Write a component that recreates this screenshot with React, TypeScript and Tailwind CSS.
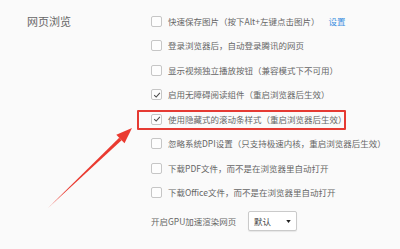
import { ReactNode } from "react";

const font = { fontFamily: '"Noto Sans CJK SC", "Noto Sans", sans-serif' };

function Checkbox({ checked }: { checked?: boolean }) {
  return (
    <span className="flex h-[11px] w-[11px] shrink-0 items-center justify-center rounded-[2px] border border-[#c6c6c6] bg-[#fdfdfd]">
      {checked && (
        <svg viewBox="0 0 10 10" className="h-[8px] w-[8px]">
          <path d="M1.5 5.2 L4 7.6 L8.6 2.4" fill="none" stroke="#4a4a4a" strokeWidth="1.3" />
        </svg>
      )}
    </span>
  );
}

function Row({ checked, children }: { checked?: boolean; children: ReactNode }) {
  return (
    <div className="flex h-[24.5px] items-center gap-[6px]">
      <Checkbox checked={checked} />
      <span className="whitespace-nowrap">{children}</span>
    </div>
  );
}

export default function App() {
  return (
    <div className="relative h-[249px] w-[400px] overflow-hidden bg-[#fafafa] text-[#666]" style={font}>
      <div className="flex pt-[9px]">
        <div className="w-[151px] shrink-0 pl-[27px]">
          <div className="flex h-[24.5px] items-center text-[11px] text-[#666]">网页浏览</div>
        </div>
        <div className="flex flex-col text-[8.5px]">
          <Row>
            快速保存图片（按下Alt+左键点击图片）
            <span className="ml-[9px] text-[#3d8fe0]">设置</span>
          </Row>
          <Row>登录浏览器后，自动登录腾讯的网页</Row>
          <Row>显示视频独立播放按钮（兼容模式下不可用）</Row>
          <Row checked>启用无障碍阅读组件（重启浏览器后生效）</Row>
          <Row checked>使用隐藏式的滚动条样式（重启浏览器后生效）</Row>
          <Row>忽略系统DPI设置（只支持极速内核，重启浏览器后生效）</Row>
          <Row>下载PDF文件，而不是在浏览器里自动打开</Row>
          <Row>下载Office文件，而不是在浏览器里自动打开</Row>
          <div className="flex h-[32px] items-center">
            <span className="w-[97px] whitespace-nowrap">开启GPU加速渲染网页</span>
            <div className="flex h-[20px] w-[49px] items-center justify-between rounded-[2px] border border-[#cacaca] bg-white pl-[5px] pr-[5px] shadow-[0_1px_1px_rgba(0,0,0,0.08)]">
              <span className="text-[#444]">默认</span>
              <svg viewBox="0 0 6 4" className="h-[3px] w-[5px]">
                <path d="M0 0 H6 L3 4 Z" fill="#222" />
              </svg>
            </div>
          </div>
        </div>
      </div>

      {/* annotation */}
      <div className="absolute left-[137px] top-[110px] h-[20px] w-[209px] rounded-[1px] border-2 border-[#e53a33]" />
      <svg className="absolute left-0 top-0" width="400" height="249" viewBox="0 0 400 249">
        <polygon points="48,208 121.6,140.3 119.2,137.7" fill="#ea3a30" />
        <polygon points="132,128 124.5,143.3 116.3,134.7" fill="#ea3a30" />
      </svg>
    </div>
  );
}
